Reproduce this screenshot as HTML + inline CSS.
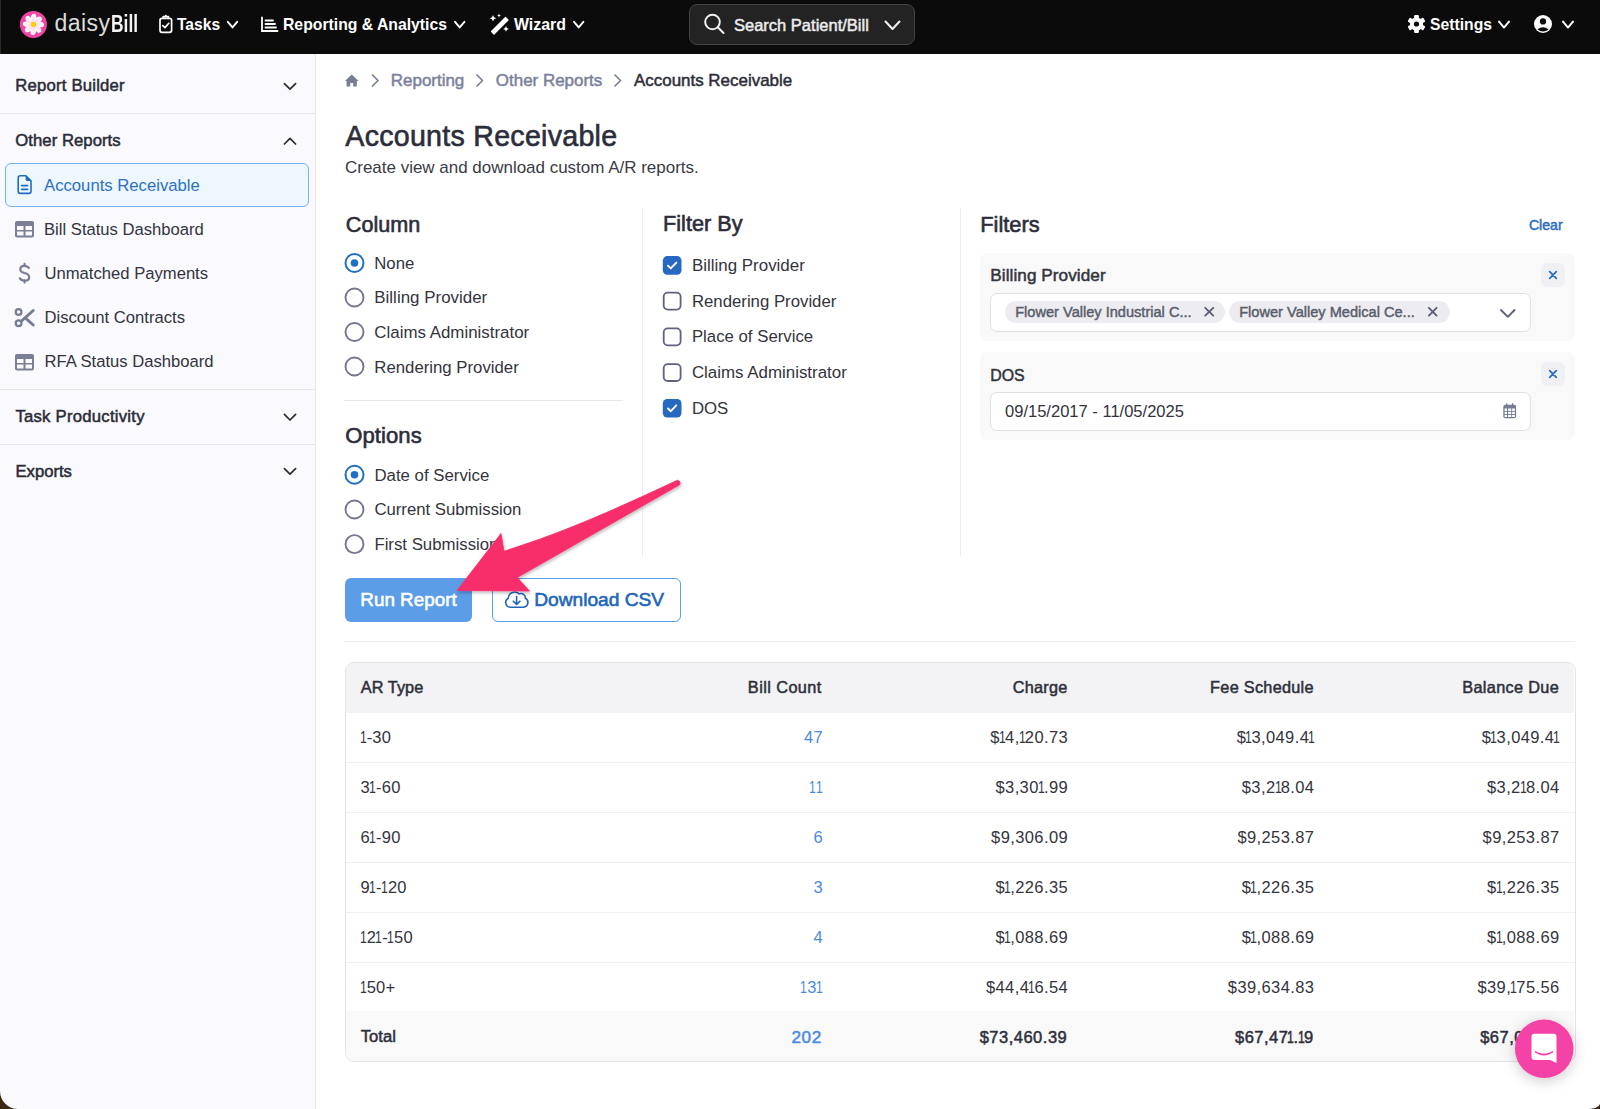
<!DOCTYPE html>
<html><head><meta charset="utf-8">
<style>
*{box-sizing:border-box;margin:0;padding:0}
html,body{width:1600px;height:1109px;overflow:hidden;background:#fff;font-family:"Liberation Sans",sans-serif;color:#33343d}
.a{position:absolute;white-space:nowrap}
svg{position:absolute;overflow:visible}
</style></head><body>
<div class="a" style="left:0px;top:0px;width:1600px;height:54px;background:#0b0b0b"></div>
<div class="a" style="left:0px;top:0px;width:1px;height:54px;background:#2a2a2a"></div>
<svg style="left:0;top:0" width="60" height="54"><defs><radialGradient id="pg" cx="0.5" cy="0.5" r="0.5" gradientUnits="objectBoundingBox" fx="0.5" fy="1"><stop offset="0" stop-color="#fbd0e8"/><stop offset="1" stop-color="#ffffff"/></radialGradient></defs><g transform="translate(33.4,24.4)"><circle r="13.5" fill="#f146a4"/><g transform="rotate(0)"><ellipse cx="0" cy="-6.4" rx="2.75" ry="4.3" fill="url(#pg)" transform="rotate(14 0 -6.4)"/></g><g transform="rotate(45)"><ellipse cx="0" cy="-6.4" rx="2.75" ry="4.3" fill="url(#pg)" transform="rotate(14 0 -6.4)"/></g><g transform="rotate(90)"><ellipse cx="0" cy="-6.4" rx="2.75" ry="4.3" fill="url(#pg)" transform="rotate(14 0 -6.4)"/></g><g transform="rotate(135)"><ellipse cx="0" cy="-6.4" rx="2.75" ry="4.3" fill="url(#pg)" transform="rotate(14 0 -6.4)"/></g><g transform="rotate(180)"><ellipse cx="0" cy="-6.4" rx="2.75" ry="4.3" fill="url(#pg)" transform="rotate(14 0 -6.4)"/></g><g transform="rotate(225)"><ellipse cx="0" cy="-6.4" rx="2.75" ry="4.3" fill="url(#pg)" transform="rotate(14 0 -6.4)"/></g><g transform="rotate(270)"><ellipse cx="0" cy="-6.4" rx="2.75" ry="4.3" fill="url(#pg)" transform="rotate(14 0 -6.4)"/></g><g transform="rotate(315)"><ellipse cx="0" cy="-6.4" rx="2.75" ry="4.3" fill="url(#pg)" transform="rotate(14 0 -6.4)"/></g><circle r="2.6" fill="#ffd200"/></g></svg>
<div class="a" style="left:54.40px;top:11.65px;font-size:23.1px;line-height:23.1px;font-weight:normal;color:#dcdcdc;letter-spacing:0.45px">daisy</div>
<div class="a" style="left:110.70px;top:12.96px;font-size:23.2px;line-height:23.2px;font-weight:bold;color:#f4f4f4;transform:scaleX(0.75);transform-origin:0 0;">Bill</div>
<svg style="left:0;top:0" width="1" height="1"><g fill="none" stroke="#fff" stroke-width="1.7" stroke-linejoin="round" stroke-linecap="round"><rect x="160" y="18.3" width="11.6" height="14" rx="2"/><path d="M163.2 18.3 V16.6 H168.4 V18.3"/><path d="M165.8 15.6 V16"/><path d="M162.8 25.6 L164.9 27.6 L168.8 23.3"/></g></svg>
<div class="a" style="left:177.00px;top:16.79px;font-size:15.6px;line-height:15.6px;font-weight:bold;color:#fff;">Tasks</div>
<svg style="left:0;top:0" width="1" height="1"><path d="M227.8 21.8 L232.5 27.4 L237.20000000000002 21.8" fill="none" stroke="#fff" stroke-width="1.9" stroke-linecap="round" stroke-linejoin="round"/></svg>
<svg style="left:0;top:0" width="1" height="1"><g fill="none" stroke="#fff" stroke-width="1.8" stroke-linecap="round"><path d="M262 17.5 V31 H277.5"/><path d="M265.5 20.5 H273"/><path d="M265.5 24 H275"/><path d="M265.5 27.5 H276"/></g></svg>
<div class="a" style="left:283.00px;top:16.66px;font-size:15.76px;line-height:15.76px;font-weight:bold;color:#fff;">Reporting &amp; Analytics</div>
<svg style="left:0;top:0" width="1" height="1"><path d="M455 21.8 L459.7 27.4 L464.4 21.8" fill="none" stroke="#fff" stroke-width="1.9" stroke-linecap="round" stroke-linejoin="round"/></svg>
<svg style="left:0;top:0" width="1" height="1"><g fill="#fff"><path d="M505.5 17.5 L508 20 L494 34 L491.5 31.5 Z" stroke="#fff" stroke-width="1.2" stroke-linejoin="round"/><path d="M493 15 l1 2.3 2.3 1 -2.3 1 -1 2.3 -1 -2.3 -2.3 -1 2.3 -1z"/><path d="M499 13.5 l.6 1.4 1.4 .6 -1.4 .6 -.6 1.4 -.6 -1.4 -1.4 -.6 1.4 -.6z"/><path d="M506 26 l.9 2 2 .9 -2 .9 -.9 2 -.9 -2 -2 -.9 2 -.9z"/></g></svg>
<div class="a" style="left:514.00px;top:16.54px;font-size:15.9px;line-height:15.9px;font-weight:bold;color:#fff;">Wizard</div>
<svg style="left:0;top:0" width="1" height="1"><path d="M574 21.8 L578.7 27.4 L583.4 21.8" fill="none" stroke="#fff" stroke-width="1.9" stroke-linecap="round" stroke-linejoin="round"/></svg>
<div class="a" style="left:689px;top:4px;width:226px;height:40.5px;background:#232323;border:1px solid #444;border-radius:8px"></div>
<svg style="left:0;top:0" width="1" height="1"><g fill="none" stroke="#f0f0f0" stroke-width="2" stroke-linecap="round"><circle cx="712.5" cy="22" r="7.3"/><path d="M717.8 27.3 L723.5 33"/></g></svg>
<div class="a" style="left:734.00px;top:16.63px;font-size:16.5px;line-height:16.5px;font-weight:normal;color:#ececec;-webkit-text-stroke:0.5px #ececec;">Search Patient/Bill</div>
<svg style="left:0;top:0" width="1" height="1"><path d="M885.5 21.5 L892.5 29.0 L899.5 21.5" fill="none" stroke="#f0f0f0" stroke-width="2" stroke-linecap="round" stroke-linejoin="round"/></svg>
<svg style="left:0;top:0" width="1" height="1"><g transform="translate(1416.5,24)"><rect x="-2.4" y="-9" width="4.8" height="5" rx="1" fill="#fff" transform="rotate(0)"/><rect x="-2.4" y="-9" width="4.8" height="5" rx="1" fill="#fff" transform="rotate(60)"/><rect x="-2.4" y="-9" width="4.8" height="5" rx="1" fill="#fff" transform="rotate(120)"/><rect x="-2.4" y="-9" width="4.8" height="5" rx="1" fill="#fff" transform="rotate(180)"/><rect x="-2.4" y="-9" width="4.8" height="5" rx="1" fill="#fff" transform="rotate(240)"/><rect x="-2.4" y="-9" width="4.8" height="5" rx="1" fill="#fff" transform="rotate(300)"/><circle r="6.6" fill="#fff"/><circle r="2.6" fill="#0b0b0b"/></g></svg>
<div class="a" style="left:1430.00px;top:17.09px;font-size:15.72px;line-height:15.72px;font-weight:bold;color:#fff;">Settings</div>
<svg style="left:0;top:0" width="1" height="1"><path d="M1499 21.6 L1504.0 27.6 L1509 21.6" fill="none" stroke="#fff" stroke-width="1.9" stroke-linecap="round" stroke-linejoin="round"/></svg>
<svg style="left:0;top:0" width="1" height="1"><g transform="translate(1543,24)"><circle r="9" fill="#fff"/><circle cx="0" cy="-2.6" r="3.1" fill="#0b0b0b"/><path d="M-5.6 5.6 Q0 0.8 5.6 5.6 Q0 9.5 -5.6 5.6Z" fill="#0b0b0b"/></g></svg>
<svg style="left:0;top:0" width="1" height="1"><path d="M1563 21.6 L1568.0 27.6 L1573 21.6" fill="none" stroke="#fff" stroke-width="1.9" stroke-linecap="round" stroke-linejoin="round"/></svg>
<div class="a" style="left:0px;top:54px;width:316px;height:1055px;background:#f9f9fe;border-right:1px solid #e5e5ea"></div>
<div class="a" style="left:15.25px;top:78.06px;font-size:16.7px;line-height:16.7px;font-weight:normal;color:#2a2b36;letter-spacing:0.21px;-webkit-text-stroke:0.5px #2a2b36;">Report Builder</div>
<svg style="left:0;top:0" width="1" height="1"><path d="M284.4 83.6 L290.0 89.19999999999999 L295.59999999999997 83.6" fill="none" stroke="#2b2b36" stroke-width="1.7" stroke-linecap="round" stroke-linejoin="round"/></svg>
<div class="a" style="left:0px;top:113px;width:315px;height:1px;background:#e4e4ea"></div>
<div class="a" style="left:15.25px;top:132.86px;font-size:16.7px;line-height:16.7px;font-weight:normal;color:#2a2b36;letter-spacing:0.05px;-webkit-text-stroke:0.5px #2a2b36;">Other Reports</div>
<svg style="left:0;top:0" width="1" height="1"><path d="M284.4 144.0 L290.0 138.4 L295.59999999999997 144.0" fill="none" stroke="#2b2b36" stroke-width="1.7" stroke-linecap="round" stroke-linejoin="round"/></svg>
<div class="a" style="left:5px;top:163px;width:304px;height:44px;background:#eef6fe;border:1px solid #74b0f2;border-radius:6px"></div>
<svg style="left:0;top:0" width="1" height="1"><g fill="none" stroke="#1f6bc4" stroke-width="1.6" stroke-linejoin="round" stroke-linecap="round"><path d="M20.4 175.8 H25.9 L31 180.9 V191.2 A2.2 2.2 0 0 1 28.8 193.4 H20.4 A2.2 2.2 0 0 1 18.2 191.2 V178 A2.2 2.2 0 0 1 20.4 175.8 Z"/><path d="M21.6 185.6 H27.6"/><path d="M21.6 189.4 H27.6"/></g><path d="M25.6 175.8 V179.6 A1.4 1.4 0 0 0 27 181 H31.2 Z" fill="#1f6bc4"/></svg>
<div class="a" style="left:44.00px;top:177.85px;font-size:16.71px;line-height:16.71px;font-weight:normal;color:#2a72c6;">Accounts Receivable</div>
<svg style="left:0;top:0" width="1" height="1"><g><rect x="15" y="221" width="19" height="16.5" rx="2" fill="#7a7f95"/><rect x="17" y="226" width="6.5" height="4" fill="#f9f9fe"/><rect x="25.5" y="226" width="6.5" height="4" fill="#f9f9fe"/><rect x="17" y="231.5" width="6.5" height="4" fill="#f9f9fe"/><rect x="25.5" y="231.5" width="6.5" height="4" fill="#f9f9fe"/></g></svg>
<div class="a" style="left:44.00px;top:221.91px;font-size:16.64px;line-height:16.64px;font-weight:normal;color:#33343d;">Bill Status Dashboard</div>
<svg style="left:0;top:0" width="1" height="1"><g fill="none" stroke="#767c93" stroke-width="2.2" stroke-linecap="round"><path d="M28.8 267.8 Q27.5 265.8 24.5 265.8 Q20.3 265.8 20.3 269.2 Q20.3 272 24.5 273 Q29.2 274 29.2 277.2 Q29.2 280.6 24.7 280.6 Q21 280.6 19.8 278.3"/><path d="M24.6 263.8 V265.8 M24.6 280.6 V282.6"/></g></svg>
<div class="a" style="left:44.50px;top:265.91px;font-size:16.64px;line-height:16.64px;font-weight:normal;color:#33343d;">Unmatched Payments</div>
<svg style="left:0;top:0" width="1" height="1"><g fill="none" stroke="#767c93" stroke-width="2.2" stroke-linecap="round"><circle cx="18.6" cy="312" r="2.9"/><circle cx="18.6" cy="323.3" r="2.9"/></g><g fill="none" stroke="#767c93" stroke-width="3" stroke-linecap="round"><path d="M21.5 321 L33.2 310.5"/><path d="M26 318.5 L33.2 325"/></g></svg>
<div class="a" style="left:44.50px;top:310.41px;font-size:16.64px;line-height:16.64px;font-weight:normal;color:#33343d;">Discount Contracts</div>
<svg style="left:0;top:0" width="1" height="1"><g><rect x="15" y="354" width="19" height="16.5" rx="2" fill="#7a7f95"/><rect x="17" y="359" width="6.5" height="4" fill="#f9f9fe"/><rect x="25.5" y="359" width="6.5" height="4" fill="#f9f9fe"/><rect x="17" y="364.5" width="6.5" height="4" fill="#f9f9fe"/><rect x="25.5" y="364.5" width="6.5" height="4" fill="#f9f9fe"/></g></svg>
<div class="a" style="left:44.50px;top:354.41px;font-size:16.64px;line-height:16.64px;font-weight:normal;color:#33343d;">RFA Status Dashboard</div>
<div class="a" style="left:0px;top:389px;width:315px;height:1px;background:#e4e4ea"></div>
<div class="a" style="left:15.45px;top:409.16px;font-size:16.7px;line-height:16.7px;font-weight:normal;color:#2a2b36;letter-spacing:0.24px;-webkit-text-stroke:0.5px #2a2b36;">Task Productivity</div>
<svg style="left:0;top:0" width="1" height="1"><path d="M284.4 414.4 L290.0 420.0 L295.59999999999997 414.4" fill="none" stroke="#2b2b36" stroke-width="1.7" stroke-linecap="round" stroke-linejoin="round"/></svg>
<div class="a" style="left:0px;top:444px;width:315px;height:1px;background:#e4e4ea"></div>
<div class="a" style="left:15.45px;top:463.59px;font-size:16.67px;line-height:16.67px;font-weight:normal;color:#2a2b36;letter-spacing:0.00px;-webkit-text-stroke:0.5px #2a2b36;">Exports</div>
<svg style="left:0;top:0" width="1" height="1"><path d="M284.4 468.6 L290.0 474.20000000000005 L295.59999999999997 468.6" fill="none" stroke="#2b2b36" stroke-width="1.7" stroke-linecap="round" stroke-linejoin="round"/></svg>
<svg style="left:0;top:0" width="1" height="1"><path d="M351.7 74.6 L358.5 81 H356.8 V86.5 H353.2 V83 H350.2 V86.5 H346.6 V81 H345 Z" fill="#767c93"/></svg>
<svg style="left:0;top:0" width="1" height="1"><path d="M372.5 75 L378.0 80.5 L372.5 86" fill="none" stroke="#7b819b" stroke-width="1.7" stroke-linecap="round" stroke-linejoin="round"/></svg>
<div class="a" style="left:390.85px;top:72.64px;font-size:16.96px;line-height:16.96px;font-weight:normal;color:#7b819b;letter-spacing:0.00px;-webkit-text-stroke:0.5px #7b819b;">Reporting</div>
<svg style="left:0;top:0" width="1" height="1"><path d="M477 75 L482.5 80.5 L477 86" fill="none" stroke="#7b819b" stroke-width="1.7" stroke-linecap="round" stroke-linejoin="round"/></svg>
<div class="a" style="left:495.85px;top:72.64px;font-size:16.96px;line-height:16.96px;font-weight:normal;color:#7b819b;letter-spacing:0.00px;-webkit-text-stroke:0.5px #7b819b;">Other Reports</div>
<svg style="left:0;top:0" width="1" height="1"><path d="M615 75 L620.5 80.5 L615 86" fill="none" stroke="#7b819b" stroke-width="1.7" stroke-linecap="round" stroke-linejoin="round"/></svg>
<div class="a" style="left:634.00px;top:72.63px;font-size:16.97px;line-height:16.97px;font-weight:normal;color:#2d2e3a;letter-spacing:0.00px;-webkit-text-stroke:0.5px #2d2e3a;">Accounts Receivable</div>
<div class="a" style="left:345.30px;top:122.38px;font-size:28.61px;line-height:28.61px;font-weight:normal;color:#2c2d3a;letter-spacing:0.26px;-webkit-text-stroke:0.6px #2c2d3a;">Accounts Receivable</div>
<div class="a" style="left:345.00px;top:159.23px;font-size:16.98px;line-height:16.98px;font-weight:normal;color:#3a3b46;">Create view and download custom A/R reports.</div>
<div class="a" style="left:345.80px;top:213.52px;font-size:21.6px;line-height:21.6px;font-weight:normal;color:#2c2d3a;letter-spacing:0.00px;-webkit-text-stroke:0.6px #2c2d3a;">Column</div>
<svg style="left:0;top:0" width="1" height="1"><circle cx="354.5" cy="263.0" r="9" fill="#fff" stroke="#1f6fc5" stroke-width="2"/><circle cx="354.5" cy="263.0" r="3.8" fill="#1f6fc5"/></svg>
<div class="a" style="left:374.30px;top:256.04px;font-size:16.73px;line-height:16.73px;font-weight:normal;color:#33343d;">None</div>
<svg style="left:0;top:0" width="1" height="1"><circle cx="354.5" cy="297.5" r="9" fill="#fff" stroke="#74778f" stroke-width="1.9"/></svg>
<div class="a" style="left:374.30px;top:290.36px;font-size:16.94px;line-height:16.94px;font-weight:normal;color:#33343d;">Billing Provider</div>
<svg style="left:0;top:0" width="1" height="1"><circle cx="354.5" cy="332.0" r="9" fill="#fff" stroke="#74778f" stroke-width="1.9"/></svg>
<div class="a" style="left:374.30px;top:324.89px;font-size:16.9px;line-height:16.9px;font-weight:normal;color:#33343d;">Claims Administrator</div>
<svg style="left:0;top:0" width="1" height="1"><circle cx="354.5" cy="366.5" r="9" fill="#fff" stroke="#74778f" stroke-width="1.9"/></svg>
<div class="a" style="left:374.30px;top:359.50px;font-size:16.78px;line-height:16.78px;font-weight:normal;color:#33343d;">Rendering Provider</div>
<div class="a" style="left:344px;top:400px;width:279px;height:1px;background:#e6e6ec"></div>
<div class="a" style="left:345.30px;top:425.41px;font-size:22.08px;line-height:22.08px;font-weight:normal;color:#2c2d3a;letter-spacing:0.05px;-webkit-text-stroke:0.6px #2c2d3a;">Options</div>
<svg style="left:0;top:0" width="1" height="1"><circle cx="354.5" cy="474.75" r="9" fill="#fff" stroke="#1f6fc5" stroke-width="2"/><circle cx="354.5" cy="474.75" r="3.8" fill="#1f6fc5"/></svg>
<div class="a" style="left:374.40px;top:467.71px;font-size:16.82px;line-height:16.82px;font-weight:normal;color:#33343d;">Date of Service</div>
<svg style="left:0;top:0" width="1" height="1"><circle cx="354.5" cy="509.45" r="9" fill="#fff" stroke="#74778f" stroke-width="1.9"/></svg>
<div class="a" style="left:374.40px;top:502.48px;font-size:16.74px;line-height:16.74px;font-weight:normal;color:#33343d;">Current Submission</div>
<svg style="left:0;top:0" width="1" height="1"><circle cx="354.5" cy="544.15" r="9" fill="#fff" stroke="#74778f" stroke-width="1.9"/></svg>
<div class="a" style="left:374.40px;top:537.13px;font-size:16.8px;line-height:16.8px;font-weight:normal;color:#33343d;">First Submission</div>
<div class="a" style="left:642px;top:208px;width:1px;height:349px;background:#ececf0"></div>
<div class="a" style="left:960px;top:208px;width:1px;height:349px;background:#ececf0"></div>
<div class="a" style="left:663.10px;top:213.47px;font-size:21.65px;line-height:21.65px;font-weight:normal;color:#2c2d3a;letter-spacing:0.00px;-webkit-text-stroke:0.6px #2c2d3a;">Filter By</div>
<svg style="left:0;top:0" width="1" height="1"><rect x="662.8" y="256.09999999999997" width="18.7" height="18.7" rx="4.5" fill="#2769c2"/><path d="M668.0 265.7 L670.8 268.4 L676.3 262.59999999999997" fill="none" stroke="#fff" stroke-width="1.9" stroke-linecap="round" stroke-linejoin="round"/></svg>
<div class="a" style="left:691.90px;top:257.86px;font-size:16.94px;line-height:16.94px;font-weight:normal;color:#33343d;">Billing Provider</div>
<svg style="left:0;top:0" width="1" height="1"><rect x="663.6999999999999" y="292.7" width="16.9" height="16.9" rx="4" fill="#fff" stroke="#5f6380" stroke-width="1.8"/></svg>
<div class="a" style="left:691.90px;top:293.70px;font-size:16.78px;line-height:16.78px;font-weight:normal;color:#33343d;">Rendering Provider</div>
<svg style="left:0;top:0" width="1" height="1"><rect x="663.6999999999999" y="328.4" width="16.9" height="16.9" rx="4" fill="#fff" stroke="#5f6380" stroke-width="1.8"/></svg>
<div class="a" style="left:691.90px;top:329.38px;font-size:16.8px;line-height:16.8px;font-weight:normal;color:#33343d;">Place of Service</div>
<svg style="left:0;top:0" width="1" height="1"><rect x="663.6999999999999" y="364.1" width="16.9" height="16.9" rx="4" fill="#fff" stroke="#5f6380" stroke-width="1.8"/></svg>
<div class="a" style="left:691.90px;top:364.99px;font-size:16.9px;line-height:16.9px;font-weight:normal;color:#33343d;">Claims Administrator</div>
<svg style="left:0;top:0" width="1" height="1"><rect x="662.8" y="398.9" width="18.7" height="18.7" rx="4.5" fill="#2769c2"/><path d="M668.0 408.5 L670.8 411.2 L676.3 405.4" fill="none" stroke="#fff" stroke-width="1.9" stroke-linecap="round" stroke-linejoin="round"/></svg>
<div class="a" style="left:691.90px;top:400.78px;font-size:16.8px;line-height:16.8px;font-weight:normal;color:#33343d;">DOS</div>
<div class="a" style="left:980.30px;top:214.13px;font-size:21.82px;line-height:21.82px;font-weight:normal;color:#2c2d3a;letter-spacing:0.00px;-webkit-text-stroke:0.6px #2c2d3a;">Filters</div>
<div class="a" style="left:1528.95px;top:217.96px;font-size:14.1px;line-height:14.1px;font-weight:normal;color:#2a6fbf;letter-spacing:0.00px;-webkit-text-stroke:0.5px #2a6fbf;">Clear</div>
<div class="a" style="left:980px;top:253px;width:595px;height:88px;background:#f9f9fa;border-radius:8px"></div>
<div class="a" style="left:990.25px;top:267.49px;font-size:17.14px;line-height:17.14px;font-weight:normal;color:#33343d;letter-spacing:0.08px;-webkit-text-stroke:0.5px #33343d;">Billing Provider</div>
<div class="a" style="left:1541px;top:263px;width:24px;height:24px;background:#f0f0f4;border-radius:6px"></div>
<svg style="left:0;top:0" width="1" height="1"><path d="M1549.7 271.7 L1556.3 278.3 M1556.3 271.7 L1549.7 278.3" stroke="#2a6fbf" stroke-width="1.75" stroke-linecap="round"/></svg>
<div class="a" style="left:990px;top:293px;width:541px;height:38.5px;background:#fff;border:1px solid #e0e0e5;border-radius:7px"></div>
<div class="a" style="left:980px;top:352px;width:595px;height:88px;background:#f9f9fa;border-radius:8px"></div>
<div class="a" style="left:990.25px;top:367.52px;font-size:15.92px;line-height:15.92px;font-weight:normal;color:#33343d;letter-spacing:0.00px;-webkit-text-stroke:0.5px #33343d;">DOS</div>
<div class="a" style="left:1541px;top:362px;width:24px;height:24px;background:#f0f0f4;border-radius:6px"></div>
<svg style="left:0;top:0" width="1" height="1"><path d="M1549.7 370.7 L1556.3 377.3 M1556.3 370.7 L1549.7 377.3" stroke="#2a6fbf" stroke-width="1.75" stroke-linecap="round"/></svg>
<div class="a" style="left:990px;top:392px;width:541px;height:38.5px;background:#fff;border:1px solid #e0e0e5;border-radius:7px"></div>
<div class="a" style="left:1005px;top:301px;width:220px;height:22px;background:#ededf1;border-radius:11px"></div>
<div class="a" style="left:1015.23px;top:304.65px;font-size:14.59px;line-height:14.59px;font-weight:normal;color:#5a5d6c;letter-spacing:0.00px;-webkit-text-stroke:0.45px #5a5d6c;">Flower Valley Industrial C...</div>
<svg style="left:0;top:0" width="1" height="1"><path d="M1205.2 307.8 L1213.3 315.6 M1213.3 307.8 L1205.2 315.6" stroke="#585c72" stroke-width="1.8" stroke-linecap="round"/></svg>
<div class="a" style="left:1229px;top:301px;width:221px;height:22px;background:#ededf1;border-radius:11px"></div>
<div class="a" style="left:1239.22px;top:304.66px;font-size:14.58px;line-height:14.58px;font-weight:normal;color:#5a5d6c;letter-spacing:0.00px;-webkit-text-stroke:0.45px #5a5d6c;">Flower Valley Medical Ce...</div>
<svg style="left:0;top:0" width="1" height="1"><path d="M1428.9 307.8 L1436.6 315.6 M1436.6 307.8 L1428.9 315.6" stroke="#585c72" stroke-width="1.8" stroke-linecap="round"/></svg>
<svg style="left:0;top:0" width="1" height="1"><path d="M1501 310 L1507.8 316.8 L1514.6 310" fill="none" stroke="#5c6078" stroke-width="1.9" stroke-linecap="round" stroke-linejoin="round"/></svg>
<div class="a" style="left:1005.00px;top:403.50px;font-size:16.54px;line-height:16.54px;font-weight:normal;color:#33343d;">09/15/2017 - 11/05/2025</div>
<svg style="left:0;top:0" width="1" height="1"><g fill="#767c93"><rect x="1503.3" y="404.8" width="12.8" height="13.5" rx="2"/><rect x="1506" y="403.2" width="1.4" height="2.5" rx=".5"/><rect x="1511.9" y="403.2" width="1.4" height="2.5" rx=".5"/><rect x="1504.6" y="408.5" width="2.4" height="2.4" fill="#fff"/><rect x="1504.6" y="411.8" width="2.4" height="2.1" fill="#fff"/><rect x="1504.6" y="414.9" width="2.4" height="2.1" fill="#fff"/><rect x="1508.1" y="408.5" width="3.1" height="2.4" fill="#fff"/><rect x="1508.1" y="411.8" width="3.1" height="2.1" fill="#fff"/><rect x="1508.1" y="414.9" width="3.1" height="2.1" fill="#fff"/><rect x="1512.1" y="408.5" width="2.8" height="2.4" fill="#fff"/><rect x="1512.1" y="411.8" width="2.8" height="2.1" fill="#fff"/><rect x="1512.1" y="414.9" width="2.8" height="2.1" fill="#fff"/></g></svg>
<div class="a" style="left:345px;top:578px;width:127px;height:44px;background:#5c9de8;border-radius:6px"></div>
<div class="a" style="left:360.30px;top:591.04px;font-size:18.85px;line-height:18.85px;font-weight:normal;color:#fff;letter-spacing:0.00px;-webkit-text-stroke:0.6px #fff;">Run Report</div>
<div class="a" style="left:492px;top:578px;width:189px;height:44px;background:#fff;border:1px solid #5b9de6;border-radius:6px"></div>
<svg style="left:0;top:0" width="1" height="1"><g fill="none" stroke="#1e66ba" stroke-width="1.6" stroke-linecap="round" stroke-linejoin="round"><path d="M510.5 607.2 A4.8 4.8 0 0 1 508.2 598.2 A6.5 6.5 0 0 1 519.2 593.9 A4.3 4.3 0 0 1 525.3 598.3 A4.7 4.7 0 0 1 523.5 607.2 Z"/><path d="M516.6 596.6 V604.3 M513.3 601.2 L516.6 604.5 L519.9 601.2"/></g></svg>
<div class="a" style="left:534.20px;top:589.97px;font-size:19.17px;line-height:19.17px;font-weight:normal;color:#1e66ba;letter-spacing:0.00px;-webkit-text-stroke:0.6px #1e66ba;">Download CSV</div>
<div class="a" style="left:344px;top:641px;width:1231px;height:1px;background:#eeeef1"></div>
<div class="a" style="left:345px;top:662px;width:1231px;height:400px;border:1px solid #e2e2e7;border-radius:9px;overflow:hidden;background:#fff"></div>
<div class="a" style="left:346px;top:663px;width:1228px;height:50px;background:#f3f3f5;border-radius:8px 8px 0 0"></div>
<div class="a" style="left:346px;top:1011px;width:1228px;height:50px;background:#f9f9f9;border-radius:0 0 8px 8px"></div>
<div class="a" style="left:346px;top:762px;width:1229px;height:1px;background:#f0f0f3"></div>
<div class="a" style="left:346px;top:812px;width:1229px;height:1px;background:#f0f0f3"></div>
<div class="a" style="left:346px;top:862px;width:1229px;height:1px;background:#f0f0f3"></div>
<div class="a" style="left:346px;top:912px;width:1229px;height:1px;background:#f0f0f3"></div>
<div class="a" style="left:346px;top:962px;width:1229px;height:1px;background:#f0f0f3"></div>
<div class="a" style="left:360.75px;top:678.63px;font-size:16.27px;line-height:16.27px;font-weight:normal;color:#2e2f3b;letter-spacing:0.07px;-webkit-text-stroke:0.5px #2e2f3b;">AR Type</div>
<div class="a" style="right:778.65px;top:678.63px;font-size:16.27px;line-height:16.27px;font-weight:normal;color:#2e2f3b;text-align:right;margin-right:-0.43px;letter-spacing:0.43px;-webkit-text-stroke:0.5px #2e2f3b;">Bill Count</div>
<div class="a" style="right:532.75px;top:678.63px;font-size:16.27px;line-height:16.27px;font-weight:normal;color:#2e2f3b;text-align:right;margin-right:-0.23px;letter-spacing:0.23px;-webkit-text-stroke:0.5px #2e2f3b;">Charge</div>
<div class="a" style="right:286.43px;top:678.63px;font-size:16.27px;line-height:16.27px;font-weight:normal;color:#2e2f3b;text-align:right;margin-right:-0.28px;letter-spacing:0.28px;-webkit-text-stroke:0.5px #2e2f3b;">Fee Schedule</div>
<div class="a" style="right:41.27px;top:678.63px;font-size:16.27px;line-height:16.27px;font-weight:normal;color:#2e2f3b;text-align:right;margin-right:-0.33px;letter-spacing:0.33px;-webkit-text-stroke:0.5px #2e2f3b;">Balance Due</div>
<div class="a" style="left:360.50px;top:728.53px;font-size:16.5px;line-height:16.5px;font-weight:normal;color:#33343d;letter-spacing:0.2px"><span style="display:inline-block;width:6.18px;overflow:visible;letter-spacing:0"><span style="display:inline-block;transform:translateX(-0.9px) scaleX(0.74);transform-origin:0 0">1</span></span>-30</div>
<div class="a" style="right:777.20px;top:728.53px;font-size:16.5px;line-height:16.5px;font-weight:normal;color:#4a8be0;text-align:right;letter-spacing:0.2px">47</div>
<div class="a" style="right:531.90px;top:728.53px;font-size:16.5px;line-height:16.5px;font-weight:normal;color:#33343d;text-align:right;letter-spacing:0.4px">$<span style="display:inline-block;width:5.18px;overflow:visible;letter-spacing:0"><span style="display:inline-block;transform:translateX(-0.9px) scaleX(0.74);transform-origin:0 0">1</span></span>4,<span style="display:inline-block;width:5.18px;overflow:visible;letter-spacing:0"><span style="display:inline-block;transform:translateX(-0.9px) scaleX(0.74);transform-origin:0 0">1</span></span>20.73</div>
<div class="a" style="right:285.60px;top:728.53px;font-size:16.5px;line-height:16.5px;font-weight:normal;color:#33343d;text-align:right;letter-spacing:0.4px">$<span style="display:inline-block;width:5.18px;overflow:visible;letter-spacing:0"><span style="display:inline-block;transform:translateX(-0.9px) scaleX(0.74);transform-origin:0 0">1</span></span>3,049.4<span style="display:inline-block;width:5.18px;overflow:visible;letter-spacing:0"><span style="display:inline-block;transform:translateX(-0.9px) scaleX(0.74);transform-origin:0 0">1</span></span></div>
<div class="a" style="right:40.40px;top:728.53px;font-size:16.5px;line-height:16.5px;font-weight:normal;color:#33343d;text-align:right;letter-spacing:0.4px">$<span style="display:inline-block;width:5.18px;overflow:visible;letter-spacing:0"><span style="display:inline-block;transform:translateX(-0.9px) scaleX(0.74);transform-origin:0 0">1</span></span>3,049.4<span style="display:inline-block;width:5.18px;overflow:visible;letter-spacing:0"><span style="display:inline-block;transform:translateX(-0.9px) scaleX(0.74);transform-origin:0 0">1</span></span></div>
<div class="a" style="left:360.50px;top:778.53px;font-size:16.5px;line-height:16.5px;font-weight:normal;color:#33343d;letter-spacing:0.2px">3<span style="display:inline-block;width:6.18px;overflow:visible;letter-spacing:0"><span style="display:inline-block;transform:translateX(-0.9px) scaleX(0.74);transform-origin:0 0">1</span></span>-60</div>
<div class="a" style="right:777.19px;top:778.53px;font-size:16.5px;line-height:16.5px;font-weight:normal;color:#4a8be0;text-align:right;letter-spacing:0.2px"><span style="display:inline-block;width:6.18px;overflow:visible;letter-spacing:0"><span style="display:inline-block;transform:translateX(-0.9px) scaleX(0.74);transform-origin:0 0">1</span></span><span style="display:inline-block;width:6.18px;overflow:visible;letter-spacing:0"><span style="display:inline-block;transform:translateX(-0.9px) scaleX(0.74);transform-origin:0 0">1</span></span></div>
<div class="a" style="right:531.92px;top:778.53px;font-size:16.5px;line-height:16.5px;font-weight:normal;color:#33343d;text-align:right;letter-spacing:0.4px">$3,30<span style="display:inline-block;width:5.18px;overflow:visible;letter-spacing:0"><span style="display:inline-block;transform:translateX(-0.9px) scaleX(0.74);transform-origin:0 0">1</span></span>.99</div>
<div class="a" style="right:285.62px;top:778.53px;font-size:16.5px;line-height:16.5px;font-weight:normal;color:#33343d;text-align:right;letter-spacing:0.4px">$3,2<span style="display:inline-block;width:5.18px;overflow:visible;letter-spacing:0"><span style="display:inline-block;transform:translateX(-0.9px) scaleX(0.74);transform-origin:0 0">1</span></span>8.04</div>
<div class="a" style="right:40.42px;top:778.53px;font-size:16.5px;line-height:16.5px;font-weight:normal;color:#33343d;text-align:right;letter-spacing:0.4px">$3,2<span style="display:inline-block;width:5.18px;overflow:visible;letter-spacing:0"><span style="display:inline-block;transform:translateX(-0.9px) scaleX(0.74);transform-origin:0 0">1</span></span>8.04</div>
<div class="a" style="left:360.50px;top:828.53px;font-size:16.5px;line-height:16.5px;font-weight:normal;color:#33343d;letter-spacing:0.2px">6<span style="display:inline-block;width:6.18px;overflow:visible;letter-spacing:0"><span style="display:inline-block;transform:translateX(-0.9px) scaleX(0.74);transform-origin:0 0">1</span></span>-90</div>
<div class="a" style="right:777.18px;top:828.53px;font-size:16.5px;line-height:16.5px;font-weight:normal;color:#4a8be0;text-align:right;letter-spacing:0.2px">6</div>
<div class="a" style="right:531.92px;top:828.53px;font-size:16.5px;line-height:16.5px;font-weight:normal;color:#33343d;text-align:right;letter-spacing:0.4px">$9,306.09</div>
<div class="a" style="right:285.62px;top:828.53px;font-size:16.5px;line-height:16.5px;font-weight:normal;color:#33343d;text-align:right;letter-spacing:0.4px">$9,253.87</div>
<div class="a" style="right:40.42px;top:828.53px;font-size:16.5px;line-height:16.5px;font-weight:normal;color:#33343d;text-align:right;letter-spacing:0.4px">$9,253.87</div>
<div class="a" style="left:360.50px;top:878.53px;font-size:16.5px;line-height:16.5px;font-weight:normal;color:#33343d;letter-spacing:0.2px">9<span style="display:inline-block;width:6.18px;overflow:visible;letter-spacing:0"><span style="display:inline-block;transform:translateX(-0.9px) scaleX(0.74);transform-origin:0 0">1</span></span>-<span style="display:inline-block;width:6.18px;overflow:visible;letter-spacing:0"><span style="display:inline-block;transform:translateX(-0.9px) scaleX(0.74);transform-origin:0 0">1</span></span>20</div>
<div class="a" style="right:777.18px;top:878.53px;font-size:16.5px;line-height:16.5px;font-weight:normal;color:#4a8be0;text-align:right;letter-spacing:0.2px">3</div>
<div class="a" style="right:531.92px;top:878.53px;font-size:16.5px;line-height:16.5px;font-weight:normal;color:#33343d;text-align:right;letter-spacing:0.4px">$<span style="display:inline-block;width:5.18px;overflow:visible;letter-spacing:0"><span style="display:inline-block;transform:translateX(-0.9px) scaleX(0.74);transform-origin:0 0">1</span></span>,226.35</div>
<div class="a" style="right:285.62px;top:878.53px;font-size:16.5px;line-height:16.5px;font-weight:normal;color:#33343d;text-align:right;letter-spacing:0.4px">$<span style="display:inline-block;width:5.18px;overflow:visible;letter-spacing:0"><span style="display:inline-block;transform:translateX(-0.9px) scaleX(0.74);transform-origin:0 0">1</span></span>,226.35</div>
<div class="a" style="right:40.42px;top:878.53px;font-size:16.5px;line-height:16.5px;font-weight:normal;color:#33343d;text-align:right;letter-spacing:0.4px">$<span style="display:inline-block;width:5.18px;overflow:visible;letter-spacing:0"><span style="display:inline-block;transform:translateX(-0.9px) scaleX(0.74);transform-origin:0 0">1</span></span>,226.35</div>
<div class="a" style="left:360.50px;top:928.53px;font-size:16.5px;line-height:16.5px;font-weight:normal;color:#33343d;letter-spacing:0.2px"><span style="display:inline-block;width:6.18px;overflow:visible;letter-spacing:0"><span style="display:inline-block;transform:translateX(-0.9px) scaleX(0.74);transform-origin:0 0">1</span></span>2<span style="display:inline-block;width:6.18px;overflow:visible;letter-spacing:0"><span style="display:inline-block;transform:translateX(-0.9px) scaleX(0.74);transform-origin:0 0">1</span></span>-<span style="display:inline-block;width:6.18px;overflow:visible;letter-spacing:0"><span style="display:inline-block;transform:translateX(-0.9px) scaleX(0.74);transform-origin:0 0">1</span></span>50</div>
<div class="a" style="right:777.18px;top:928.53px;font-size:16.5px;line-height:16.5px;font-weight:normal;color:#4a8be0;text-align:right;letter-spacing:0.2px">4</div>
<div class="a" style="right:531.92px;top:928.53px;font-size:16.5px;line-height:16.5px;font-weight:normal;color:#33343d;text-align:right;letter-spacing:0.4px">$<span style="display:inline-block;width:5.18px;overflow:visible;letter-spacing:0"><span style="display:inline-block;transform:translateX(-0.9px) scaleX(0.74);transform-origin:0 0">1</span></span>,088.69</div>
<div class="a" style="right:285.62px;top:928.53px;font-size:16.5px;line-height:16.5px;font-weight:normal;color:#33343d;text-align:right;letter-spacing:0.4px">$<span style="display:inline-block;width:5.18px;overflow:visible;letter-spacing:0"><span style="display:inline-block;transform:translateX(-0.9px) scaleX(0.74);transform-origin:0 0">1</span></span>,088.69</div>
<div class="a" style="right:40.42px;top:928.53px;font-size:16.5px;line-height:16.5px;font-weight:normal;color:#33343d;text-align:right;letter-spacing:0.4px">$<span style="display:inline-block;width:5.18px;overflow:visible;letter-spacing:0"><span style="display:inline-block;transform:translateX(-0.9px) scaleX(0.74);transform-origin:0 0">1</span></span>,088.69</div>
<div class="a" style="left:360.50px;top:978.53px;font-size:16.5px;line-height:16.5px;font-weight:normal;color:#33343d;letter-spacing:0.2px"><span style="display:inline-block;width:6.18px;overflow:visible;letter-spacing:0"><span style="display:inline-block;transform:translateX(-0.9px) scaleX(0.74);transform-origin:0 0">1</span></span>50+</div>
<div class="a" style="right:777.18px;top:978.53px;font-size:16.5px;line-height:16.5px;font-weight:normal;color:#4a8be0;text-align:right;letter-spacing:0.2px"><span style="display:inline-block;width:6.18px;overflow:visible;letter-spacing:0"><span style="display:inline-block;transform:translateX(-0.9px) scaleX(0.74);transform-origin:0 0">1</span></span>3<span style="display:inline-block;width:6.18px;overflow:visible;letter-spacing:0"><span style="display:inline-block;transform:translateX(-0.9px) scaleX(0.74);transform-origin:0 0">1</span></span></div>
<div class="a" style="right:531.90px;top:978.53px;font-size:16.5px;line-height:16.5px;font-weight:normal;color:#33343d;text-align:right;letter-spacing:0.4px">$44,4<span style="display:inline-block;width:5.18px;overflow:visible;letter-spacing:0"><span style="display:inline-block;transform:translateX(-0.9px) scaleX(0.74);transform-origin:0 0">1</span></span>6.54</div>
<div class="a" style="right:285.60px;top:978.53px;font-size:16.5px;line-height:16.5px;font-weight:normal;color:#33343d;text-align:right;letter-spacing:0.4px">$39,634.83</div>
<div class="a" style="right:40.40px;top:978.53px;font-size:16.5px;line-height:16.5px;font-weight:normal;color:#33343d;text-align:right;letter-spacing:0.4px">$39,<span style="display:inline-block;width:5.18px;overflow:visible;letter-spacing:0"><span style="display:inline-block;transform:translateX(-0.9px) scaleX(0.74);transform-origin:0 0">1</span></span>75.56</div>
<div class="a" style="left:360.75px;top:1029.23px;font-size:16.62px;line-height:16.62px;font-weight:normal;color:#2e2f3b;letter-spacing:0.00px;-webkit-text-stroke:0.5px #2e2f3b;">Total</div>
<div class="a" style="right:778.63px;top:1028.79px;font-size:17.14px;line-height:17.14px;font-weight:normal;color:#4a8be0;text-align:right;margin-right:-0.71px;letter-spacing:0.71px;-webkit-text-stroke:0.5px #4a8be0;">202</div>
<div class="a" style="right:532.75px;top:1029.33px;font-size:16.5px;line-height:16.5px;font-weight:normal;color:#2e2f3b;text-align:right;letter-spacing:0.5px;-webkit-text-stroke:0.5px #2e2f3b;">$73,460.39</div>
<div class="a" style="right:286.45px;top:1029.33px;font-size:16.5px;line-height:16.5px;font-weight:normal;color:#2e2f3b;text-align:right;letter-spacing:0.5px;-webkit-text-stroke:0.5px #2e2f3b;">$67,47<span style="display:inline-block;width:5.18px;overflow:visible;letter-spacing:0"><span style="display:inline-block;transform:translateX(-0.9px) scaleX(0.74);transform-origin:0 0">1</span></span>.<span style="display:inline-block;width:5.18px;overflow:visible;letter-spacing:0"><span style="display:inline-block;transform:translateX(-0.9px) scaleX(0.74);transform-origin:0 0">1</span></span>9</div>
<div class="a" style="right:41.24px;top:1029.33px;font-size:16.5px;line-height:16.5px;font-weight:normal;color:#2e2f3b;text-align:right;letter-spacing:0.5px;-webkit-text-stroke:0.5px #2e2f3b;">$67,004.<span style="display:inline-block;width:5.18px;overflow:visible;letter-spacing:0"><span style="display:inline-block;transform:translateX(-0.9px) scaleX(0.74);transform-origin:0 0">1</span></span><span style="display:inline-block;width:5.18px;overflow:visible;letter-spacing:0"><span style="display:inline-block;transform:translateX(-0.9px) scaleX(0.74);transform-origin:0 0">1</span></span></div>
<svg style="left:0;top:0" width="1" height="1"><defs><filter id="sh" x="-20%" y="-20%" width="140%" height="140%"><feDropShadow dx="1" dy="2" stdDeviation="1.5" flood-color="#000" flood-opacity="0.25"/></filter></defs><path d="M504 551.2 C572.2 529.5 621.6 506.1 675.6 481.1 A2.4 2.4 0 0 1 679.2 485 L517.3 577.5 L529.5 591 L457 590.5 L501 533.5 Z" fill="#f72d6a" filter="url(#sh)" stroke="#f72d6a" stroke-width="0.8" stroke-linejoin="round"/></svg>
<svg style="left:0;top:0" width="1" height="1"><defs><filter id="sh2" x="-50%" y="-50%" width="200%" height="200%"><feDropShadow dx="0" dy="3" stdDeviation="7" flood-color="#000" flood-opacity="0.2"/></filter></defs><circle cx="1544.2" cy="1048.7" r="29.3" fill="#f542a6" filter="url(#sh2)"/><path d="M1534.5 1033.8 H1553.5 A3 3 0 0 1 1556.5 1036.8 V1063 L1550 1060 H1534.5 A3 3 0 0 1 1531.5 1057 V1036.8 A3 3 0 0 1 1534.5 1033.8 Z" fill="#fff"/><path d="M1535.5 1051.8 Q1544 1057.5 1552.5 1051.8" fill="none" stroke="#f542a6" stroke-width="1.6" stroke-linecap="round"/></svg>
<svg style="left:0;top:0" width="1600" height="1109"><path d="M0 1091 A18 18 0 0 0 18 1109 H0 Z" fill="#3b2612"/><path d="M1600 1103.5 Q1599 1109 1585 1109 H1600 Z" fill="#3b2612"/></svg>
</body></html>
